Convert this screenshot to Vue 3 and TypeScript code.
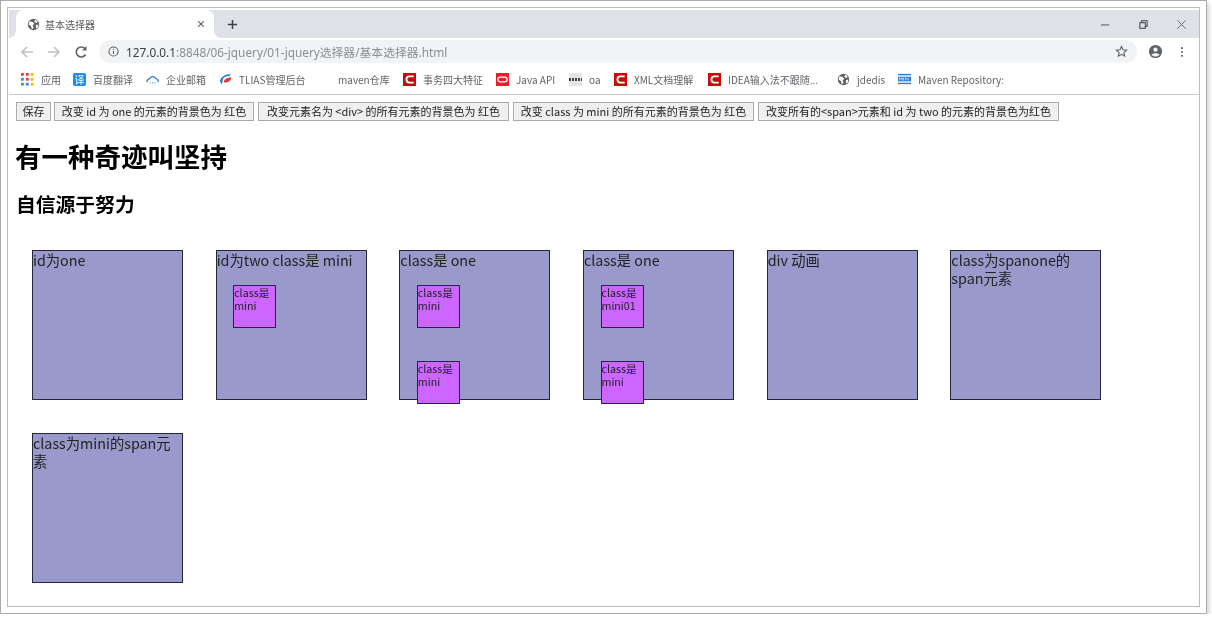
<script setup lang="ts">
interface Bookmark {
  label: string
  icon: string
  width: number
}

interface Box {
  text: string
  minis: string[]
}

const bookmarks: Bookmark[] = [
  { label: '应用', icon: 'apps', width: 52 },
  { label: '百度翻译', icon: 'fanyi', width: 73 },
  { label: '企业邮箱', icon: 'cloud', width: 73 },
  { label: 'TLIAS管理后台', icon: 'tlias', width: 119 },
  { label: 'maven仓库', icon: 'none', width: 65 },
  { label: '事务四大特征', icon: 'csdn', width: 93 },
  { label: 'Java API', icon: 'oracle', width: 73 },
  { label: 'oa', icon: 'oa', width: 45 },
  { label: 'XML文档理解', icon: 'csdn', width: 94 },
  { label: 'IDEA输入法不跟随...', icon: 'csdn', width: 129 },
  { label: 'jdedis', icon: 'globe', width: 61 },
  { label: 'Maven Repository:', icon: 'mvn', width: 120 }
]

const actions = [
  '保存',
  '改变 id 为 one 的元素的背景色为 红色',
  '改变元素名为 <div> 的所有元素的背景色为 红色',
  '改变 class 为 mini 的所有元素的背景色为 红色',
  '改变所有的<span>元素和 id 为 two 的元素的背景色为红色'
]

const boxes: Box[] = [
  { text: 'id为one', minis: [] },
  { text: 'id为two class是 mini', minis: ['class是 mini'] },
  { text: 'class是 one', minis: ['class是 mini', 'class是 mini'] },
  { text: 'class是 one', minis: ['class是 mini01', 'class是 mini'] },
  { text: 'div 动画', minis: [] },
  { text: 'class为spanone的span元素', minis: [] },
  { text: 'class为mini的span元素', minis: [] }
]
</script>

<template>
  <div class="shot">
    <div class="window">
      <div class="tabstrip">
        <div class="tab">
          <svg class="favicon" viewBox="0 0 16 16">
            <circle cx="8" cy="8" r="7" fill="#5f6368" />
            <path d="M3 4l4 1 2 2-2 2 1 3-2 2-1-4-3-2zM10 2l3 2-1 2-3-1zM11 9l3-1-1 4-2 1z" fill="#fff" />
          </svg>
          <span class="tab-title">基本选择器</span>
          <svg class="tab-close" viewBox="0 0 10 10">
            <path d="M1.5 1.5l7 7M8.5 1.5l-7 7" stroke="#5f6368" stroke-width="1.5" />
          </svg>
        </div>
        <svg class="new-tab" viewBox="0 0 12 12">
          <path d="M6 1v10M1 6h10" stroke="#3c4043" stroke-width="1.6" />
        </svg>
        <div class="win-controls">
          <svg viewBox="0 0 12 12" class="win-btn"><path d="M1 6.5h9" stroke="#5f6368" stroke-width="1.2" /></svg>
          <svg viewBox="0 0 12 12" class="win-btn">
            <path d="M2 4h6v6H2zM4 4V2h6v6H8" fill="none" stroke="#3c4043" stroke-width="1.1" />
          </svg>
          <svg viewBox="0 0 12 12" class="win-btn"><path d="M1.5 1.5l9 9M10.5 1.5l-9 9" stroke="#5f6368" stroke-width="1" /></svg>
        </div>
      </div>

      <div class="toolbar">
        <svg class="nav-icon" viewBox="0 0 14 14"><path d="M13 7H2M7 2L2 7l5 5" fill="none" stroke="#bdc1c6" stroke-width="1.6" /></svg>
        <svg class="nav-icon" viewBox="0 0 14 14"><path d="M1 7h11M7 2l5 5-5 5" fill="none" stroke="#bdc1c6" stroke-width="1.6" /></svg>
        <svg class="nav-icon" viewBox="0 0 14 14">
          <path d="M11.6 9.5A5 5 0 1 1 11 3.6" fill="none" stroke="#5f6368" stroke-width="1.6" />
          <path d="M12.5 1v4.4H8z" fill="#5f6368" />
        </svg>
        <div class="omnibox">
          <svg class="info" viewBox="0 0 12 12">
            <circle cx="6" cy="6" r="5" fill="none" stroke="#5f6368" stroke-width="1.1" />
            <path d="M6 5.2v3.6M6 3v1.2" stroke="#5f6368" stroke-width="1.2" />
          </svg>
          <span class="url"><span class="host">127.0.0.1</span>:8848/06-jquery/01-jquery选择器/基本选择器.html</span>
          <svg class="star" viewBox="0 0 14 14">
            <path d="M7 1.6l1.6 3.6 3.9.4-2.9 2.6.8 3.8L7 10.1l-3.4 1.9.8-3.8-2.9-2.6 3.9-.4z" fill="none" stroke="#5f6368" stroke-width="1.2" />
          </svg>
        </div>
        <svg class="avatar" viewBox="0 0 16 16">
          <circle cx="8" cy="8" r="7" fill="#5f6368" />
          <circle cx="8" cy="6" r="2.3" fill="#f1f3f4" />
          <path d="M3.6 11.5c1.5-2.2 7.3-2.2 8.8 0-2.3 2.6-6.5 2.6-8.8 0z" fill="#f1f3f4" />
        </svg>
        <svg class="menu" viewBox="0 0 4 14">
          <circle cx="2" cy="2.5" r="1.2" fill="#5f6368" />
          <circle cx="2" cy="7" r="1.2" fill="#5f6368" />
          <circle cx="2" cy="11.5" r="1.2" fill="#5f6368" />
        </svg>
      </div>

      <div class="bookmarks">
        <div
          v-for="mark in bookmarks"
          :key="mark.label"
          class="bookmark"
          :style="{ width: mark.width + 'px' }"
        >
          <svg v-if="mark.icon === 'apps'" class="bm-icon" viewBox="0 0 12 12">
            <g v-for="(c, i) in ['#ea4335', '#ea4335', '#fbbc05', '#4285f4', '#ea4335', '#fbbc05', '#34a853', '#4285f4', '#fbbc05']" :key="i">
              <rect :x="(i % 3) * 4.5" :y="Math.floor(i / 3) * 4.5" width="2.6" height="2.6" :fill="c" />
            </g>
          </svg>
          <div v-else-if="mark.icon === 'fanyi'" class="bm-icon fanyi">译</div>
          <svg v-else-if="mark.icon === 'cloud'" class="bm-icon" viewBox="0 0 14 14">
            <path d="M1 10a4 4 0 0 1 3-4 3.6 3.6 0 0 1 6.5 0A3 3 0 0 1 13 10" fill="none" stroke="#2a7fc9" stroke-width="1.3" />
            <path d="M4 10.5h1M6.5 10.5h1M9 10.5h1" stroke="#2a7fc9" stroke-width="1.3" />
          </svg>
          <svg v-else-if="mark.icon === 'tlias'" class="bm-icon" viewBox="0 0 14 14">
            <path d="M1 9c1-5 6-8 12-7.5-1.500 1-2 1.500-2.500 2C7 3 4 5 4 8l-1 4.500z" fill="#1f7fc4" />
            <path d="M5 10c0-3 4-5.500 8.500-5-1 3.500-4.500 6-8.500 5z" fill="#e23b3b" />
          </svg>
          <svg v-else-if="mark.icon === 'csdn'" class="bm-icon" viewBox="0 0 14 14">
            <rect width="14" height="14" fill="#c90b0b" />
            <path d="M11.5 3.7H7a3.3 3.3 0 0 0 0 6.6h4.5" fill="none" stroke="#fff" stroke-width="2" />
          </svg>
          <svg v-else-if="mark.icon === 'oracle'" class="bm-icon" viewBox="0 0 14 14">
            <rect width="14" height="14" fill="#e8202a" />
            <rect x="2" y="4.5" width="10" height="5" rx="2.5" fill="none" stroke="#fff" stroke-width="1.3" />
          </svg>
          <div v-else-if="mark.icon === 'oa'" class="bm-icon oa-icon">
            <span class="oa-mark"></span>
          </div>
          <svg v-else-if="mark.icon === 'globe'" class="bm-icon" viewBox="0 0 16 16">
            <circle cx="8" cy="8" r="7" fill="#5f6368" />
            <path d="M3 4l4 1 2 2-2 2 1 3-2 2-1-4-3-2zM10 2l3 2-1 2-3-1zM11 9l3-1-1 4-2 1z" fill="#fff" />
          </svg>
          <svg v-else-if="mark.icon === 'mvn'" class="bm-icon" viewBox="0 0 14 14">
            <rect y="1" width="14" height="1.5" fill="#1c7ed6" />
            <rect y="4" width="14" height="5" fill="#1c7ed6" />
            <path d="M1.5 8V5l1.5 2 1.5-2v3M6 5v3M8 8V5l3 3V5" fill="none" stroke="#fff" stroke-width=".7" />
            <rect y="10.5" width="14" height="1.5" fill="#1c7ed6" />
          </svg>
          <span class="bm-label">{{ mark.label }}</span>
        </div>
      </div>

      <main class="page">
        <div class="actions">
          <button v-for="text in actions" :key="text" class="action" type="button">{{ text }}</button>
        </div>
        <h1>有一种奇迹叫坚持</h1>
        <h2>自信源于努力</h2>
        <div class="boxes">
          <div v-for="(box, i) in boxes" :key="i" class="box">
            {{ box.text }}
            <div v-for="(mini, j) in box.minis" :key="j" class="mini">{{ mini }}</div>
          </div>
        </div>
      </main>
    </div>
  </div>
</template>

<style>
html,
body {
  margin: 0;
  background: #fff;
}
</style>

<style scoped>
.shot {
  box-sizing: border-box;
  width: 1207px;
  height: 614px;
  padding: 6px;
  border: 1px solid #ababab;
  background: #fff;
  box-shadow: 2px 3px 5px rgba(0, 0, 0, 0.18);
  font-family: "Noto Sans CJK SC", "Open Sans", sans-serif;
  overflow: hidden;
  filter: blur(0.3px);
}

.window {
  box-sizing: border-box;
  width: 1193px;
  height: 600px;
  padding: 2px 0 0 1px;
  border: 1px solid #bcbcbc;
  background: #fff;
}

.tabstrip {
  display: flex;
  align-items: center;
  height: 28px;
  padding-left: 7px;
  background: #dee1e6;
}

.tab {
  position: relative;
  display: flex;
  align-items: center;
  box-sizing: border-box;
  width: 198px;
  height: 28px;
  padding: 0 9px 0 11px;
  border-radius: 8px 8px 0 0;
  background: #fff;
}

.tab::before,
.tab::after {
  content: "";
  position: absolute;
  bottom: 0;
  width: 7px;
  height: 7px;
}

.tab::before {
  left: -7px;
  background: radial-gradient(circle at 0 0, #dee1e6 6.5px, #fff 7px);
}

.tab::after {
  right: -7px;
  background: radial-gradient(circle at 100% 0, #dee1e6 6.5px, #fff 7px);
}

.favicon {
  width: 13px;
  height: 13px;
  margin-right: 5px;
}

.tab-title {
  flex: 1;
  font-size: 10px;
  color: #5a5d61;
}

.tab-close {
  width: 8px;
  height: 8px;
}

.new-tab {
  width: 11px;
  height: 11px;
  margin-left: 13px;
}

.win-controls {
  display: flex;
  gap: 27px;
  align-items: center;
  margin-left: auto;
  padding-right: 12px;
}

.win-btn {
  width: 11px;
  height: 11px;
}

.toolbar {
  display: flex;
  align-items: center;
  height: 27px;
  padding-left: 11px;
}

.nav-icon {
  width: 14px;
  height: 14px;
  margin-right: 13px;
}

.omnibox {
  display: flex;
  align-items: center;
  box-sizing: border-box;
  width: 1038px;
  height: 23px;
  margin-left: -2px;
  padding: 0 9px;
  border-radius: 12px;
  background: #f1f3f4;
}

.info {
  width: 11px;
  height: 11px;
  margin-right: 7px;
}

.url {
  flex: 1;
  font-family: "Noto Sans", "Noto Sans CJK SC", sans-serif;
  font-size: 11.8px;
  color: #8b8f94;
  white-space: nowrap;
}

.host {
  color: #3c4043;
}

.star {
  width: 13px;
  height: 13px;
}

.avatar {
  width: 15px;
  height: 15px;
  margin-left: 11px;
}

.menu {
  width: 4px;
  height: 12px;
  margin-left: 17px;
}

.bookmarks {
  display: flex;
  align-items: center;
  box-sizing: border-box;
  height: 30px;
  padding-left: 12px;
  padding-bottom: 1px;
  border-bottom: 1px solid #c8cacc;
}

.bookmark {
  display: flex;
  flex: none;
  align-items: center;
  gap: 7px;
  white-space: nowrap;
}

.bm-icon {
  flex: none;
  width: 13px;
  height: 13px;
}

.fanyi {
  border-radius: 2px;
  background: #1e8cf0;
  color: #fff;
  font-size: 10px;
  line-height: 13px;
  text-align: center;
}

.oa-icon {
  display: flex;
  align-items: center;
  background: #e6e6e6;
}

.oa-mark {
  width: 100%;
  height: 3px;
  background: repeating-linear-gradient(90deg, #444 0 2px, #e6e6e6 2px 3px);
}

.bm-label {
  font-size: 10px;
  color: #5f6368;
}

.page {
  padding: 7px 0 0 7px;
  color: #000;
}

.actions {
  display: flex;
  gap: 4px;
}

.action {
  flex: none;
  box-sizing: border-box;
  width: 241px;
  height: 19px;
  padding: 0;
  border: 1px solid #a9a9a9;
  background: #efefef;
  box-shadow: inset 0 0 0 1px #f4f4f4;
  color: #222;
  font-family: "Noto Sans CJK SC", "Open Sans", sans-serif;
  font-size: 11px;
  line-height: 17px;
  text-align: center;
  white-space: nowrap;
}

.action:nth-child(1) {
  width: 35px;
  margin-right: -1px;
}

.action:nth-child(2) {
  width: 200px;
}

.action:nth-child(3) {
  width: 251px;
}

.action:nth-child(5) {
  width: 301px;
}

h1 {
  margin: 16px 0 0 -1px;
  font-size: 26.5px;
  line-height: 38px;
  font-weight: 700;
}

h2 {
  margin: 15px 0 0;
  font-size: 19.8px;
  line-height: 28px;
  font-weight: 700;
}

.boxes {
  display: flex;
  flex-wrap: wrap;
  gap: 33px 32.68px;
  margin: 32px 0 0 16px;
}

.box {
  box-sizing: border-box;
  width: 151px;
  height: 150px;
  border: 1px solid #26263a;
  background: #9999cc;
  color: #222;
  font-size: 14.3px;
  line-height: 18px;
}

.mini {
  box-sizing: border-box;
  width: 43px;
  height: 43px;
  margin: 16px 0 33px 16.5px;
  border: 1px solid #26263a;
  background: #cc66ff;
  font-size: 10.7px;
  line-height: 13px;
}
</style>
